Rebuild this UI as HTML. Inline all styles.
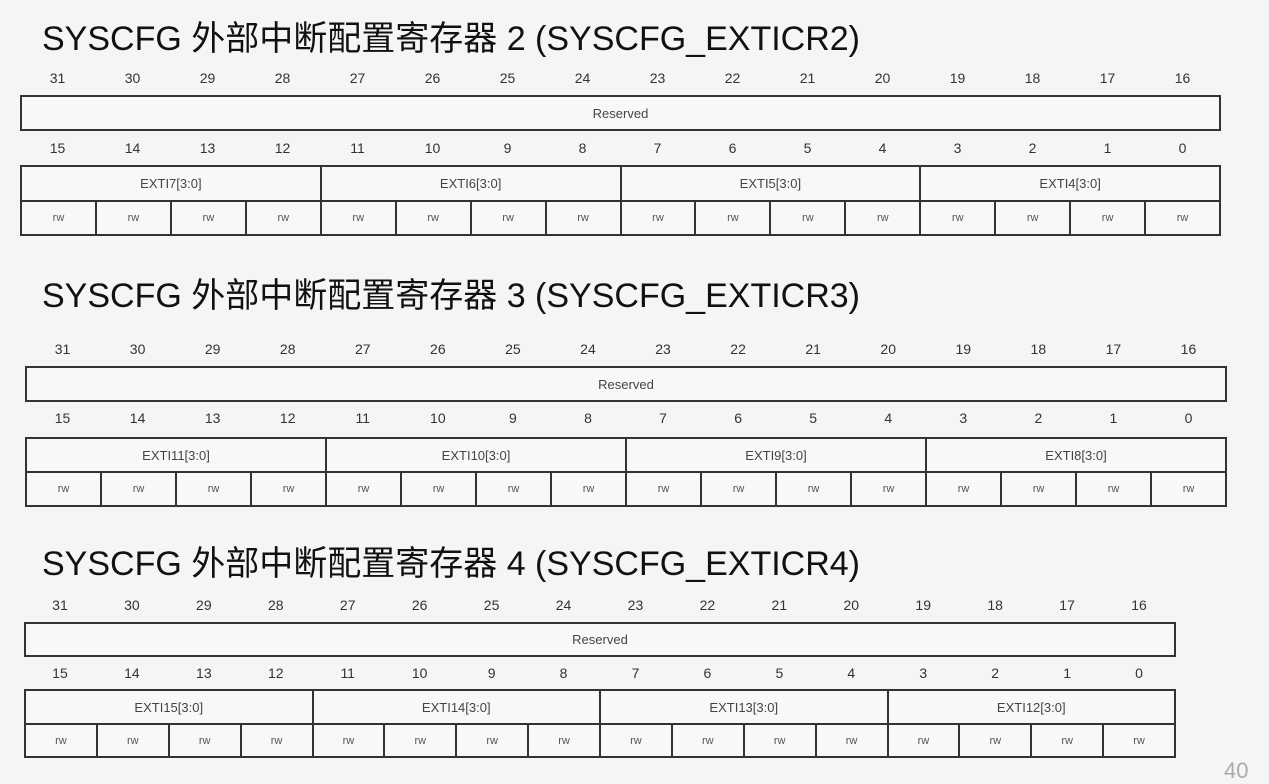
<!DOCTYPE html>
<html><head><meta charset="utf-8"><style>
body{margin:0;width:1269px;height:772px;background:#f5f5f5;position:relative;overflow:hidden;font-family:"Liberation Sans",sans-serif}
.t{position:absolute;left:42px;font-family:"Liberation Sans","Noto Sans CJK SC",sans-serif;font-size:34px;color:#111;line-height:40px;white-space:nowrap}
.n{position:absolute;display:flex;font-size:14px;color:#333;height:20px;line-height:20px}
.n span{flex:1;text-align:center}
.r{position:absolute;box-sizing:border-box;border:2px solid #333;display:flex;font-size:13px;color:#444;background:#f8f8f8}
.r span{flex:1;text-align:center;border-left:2px solid #333;display:flex;align-items:center;justify-content:center}
.r span:first-child{border-left:none}
.w{font-size:11px;color:#555}
</style></head><body>

<div class="t" style="top:19px">SYSCFG 外部中断配置寄存器 2 (SYSCFG_EXTICR2)</div>
<div class="n" style="left:20px;width:1200px;top:68px"><span>31</span><span>30</span><span>29</span><span>28</span><span>27</span><span>26</span><span>25</span><span>24</span><span>23</span><span>22</span><span>21</span><span>20</span><span>19</span><span>18</span><span>17</span><span>16</span></div>
<div class="r" style="left:20px;width:1201px;top:95px;height:36px"><span>Reserved</span></div>
<div class="n" style="left:20px;width:1200px;top:138px"><span>15</span><span>14</span><span>13</span><span>12</span><span>11</span><span>10</span><span>9</span><span>8</span><span>7</span><span>6</span><span>5</span><span>4</span><span>3</span><span>2</span><span>1</span><span>0</span></div>
<div class="r" style="left:20px;width:1201px;top:165px;height:37px"><span>EXTI7[3:0]</span><span>EXTI6[3:0]</span><span>EXTI5[3:0]</span><span>EXTI4[3:0]</span></div>
<div class="r w" style="left:20px;width:1201px;top:200px;height:36px"><span>rw</span><span>rw</span><span>rw</span><span>rw</span><span>rw</span><span>rw</span><span>rw</span><span>rw</span><span>rw</span><span>rw</span><span>rw</span><span>rw</span><span>rw</span><span>rw</span><span>rw</span><span>rw</span></div>

<div class="t" style="top:276px">SYSCFG 外部中断配置寄存器 3 (SYSCFG_EXTICR3)</div>
<div class="n" style="left:25px;width:1201px;top:339px"><span>31</span><span>30</span><span>29</span><span>28</span><span>27</span><span>26</span><span>25</span><span>24</span><span>23</span><span>22</span><span>21</span><span>20</span><span>19</span><span>18</span><span>17</span><span>16</span></div>
<div class="r" style="left:25px;width:1202px;top:366px;height:36px"><span>Reserved</span></div>
<div class="n" style="left:25px;width:1201px;top:408px"><span>15</span><span>14</span><span>13</span><span>12</span><span>11</span><span>10</span><span>9</span><span>8</span><span>7</span><span>6</span><span>5</span><span>4</span><span>3</span><span>2</span><span>1</span><span>0</span></div>
<div class="r" style="left:25px;width:1202px;top:437px;height:36px"><span>EXTI11[3:0]</span><span>EXTI10[3:0]</span><span>EXTI9[3:0]</span><span>EXTI8[3:0]</span></div>
<div class="r w" style="left:25px;width:1202px;top:471px;height:36px"><span>rw</span><span>rw</span><span>rw</span><span>rw</span><span>rw</span><span>rw</span><span>rw</span><span>rw</span><span>rw</span><span>rw</span><span>rw</span><span>rw</span><span>rw</span><span>rw</span><span>rw</span><span>rw</span></div>

<div class="t" style="top:544px">SYSCFG 外部中断配置寄存器 4 (SYSCFG_EXTICR4)</div>
<div class="n" style="left:24px;width:1151px;top:595px"><span>31</span><span>30</span><span>29</span><span>28</span><span>27</span><span>26</span><span>25</span><span>24</span><span>23</span><span>22</span><span>21</span><span>20</span><span>19</span><span>18</span><span>17</span><span>16</span></div>
<div class="r" style="left:24px;width:1152px;top:622px;height:35px"><span>Reserved</span></div>
<div class="n" style="left:24px;width:1151px;top:663px"><span>15</span><span>14</span><span>13</span><span>12</span><span>11</span><span>10</span><span>9</span><span>8</span><span>7</span><span>6</span><span>5</span><span>4</span><span>3</span><span>2</span><span>1</span><span>0</span></div>
<div class="r" style="left:24px;width:1152px;top:689px;height:36px"><span>EXTI15[3:0]</span><span>EXTI14[3:0]</span><span>EXTI13[3:0]</span><span>EXTI12[3:0]</span></div>
<div class="r w" style="left:24px;width:1152px;top:723px;height:35px"><span>rw</span><span>rw</span><span>rw</span><span>rw</span><span>rw</span><span>rw</span><span>rw</span><span>rw</span><span>rw</span><span>rw</span><span>rw</span><span>rw</span><span>rw</span><span>rw</span><span>rw</span><span>rw</span></div>

<div style="position:absolute;left:1224px;top:758px;font-size:22px;color:#aaa">40</div>
</body></html>
